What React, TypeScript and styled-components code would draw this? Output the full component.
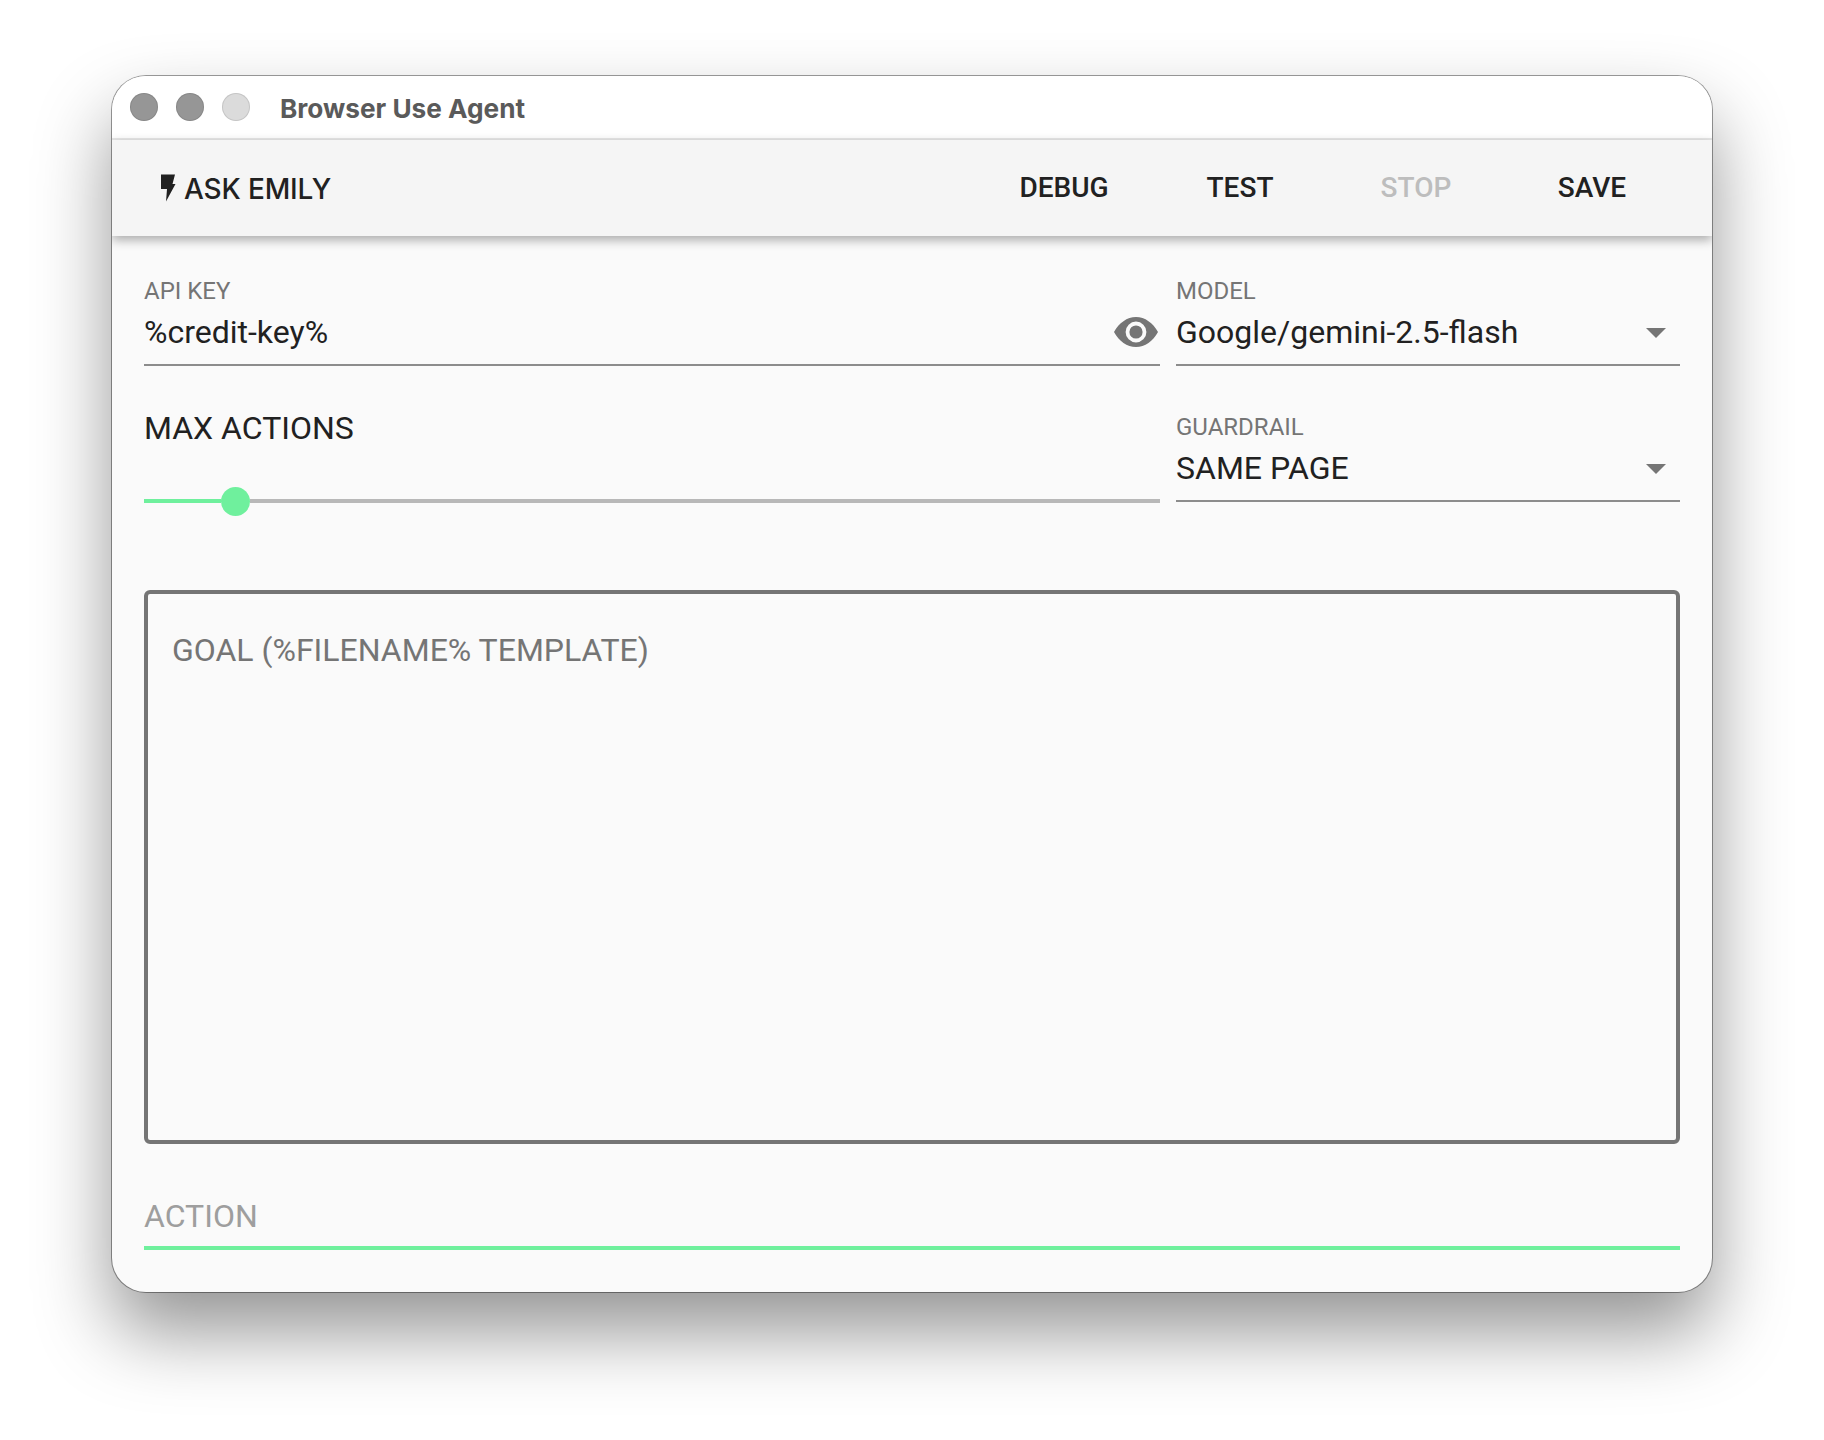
import React from "react"
import styled, { createGlobalStyle } from "styled-components"

const GlobalStyle = createGlobalStyle`
  html, body {
    margin: 0;
    padding: 0;
    background: #ffffff;
    font-family: "Roboto", "Liberation Sans", sans-serif;
  }
`

const Zap = () => (
  <svg width="18" height="28" viewBox="0 0 18 28" fill="#212121">
    <path d="M2 0.500h14l-2.500 9.500h3L7 27.500l1-12.500H2z" />
  </svg>
)

const Eye = () => (
  <svg width="48" height="48" viewBox="0 0 24 24" fill="#757575" fillRule="evenodd">
    <path d="M1 12C3.500 7.500 7.500 4.500 12 4.500s8.500 3 11 7.500c-2.500 4.500-6.500 7.500-11 7.500S3.500 16.500 1 12zM12 6.800a5.200 5.200 0 1 0 0 10.400 5.200 5.200 0 0 0 0-10.400zM12 8.700a3.300 3.300 0 1 1 0 6.600 3.300 3.300 0 0 1 0-6.600z" />
  </svg>
)

export default function App() {
  return (
    <>
      <GlobalStyle />
      <S.Page>
        <S.Window>
          <S.TitleBar>
            <S.Light $tone="#969696" />
            <S.Light $tone="#969696" />
            <S.Light $tone="#dbdbdb" />
            <S.Title>Browser Use Agent</S.Title>
          </S.TitleBar>
          <S.Toolbar>
            <S.AskButton>
              <Zap />
              <S.AskLabel>ASK EMILY</S.AskLabel>
            </S.AskButton>
            <S.Actions>
              <S.Action>DEBUG</S.Action>
              <S.Action>TEST</S.Action>
              <S.Action $disabled>STOP</S.Action>
              <S.Action>SAVE</S.Action>
            </S.Actions>
          </S.Toolbar>
          <S.Content>
            <S.Row>
              <S.Field $grow>
                <S.SmallLabel>API KEY</S.SmallLabel>
                <S.ValueLine>
                  <span>%credit-key%</span>
                  <S.EyeSlot>
                    <Eye />
                  </S.EyeSlot>
                </S.ValueLine>
              </S.Field>
              <S.Field>
                <S.SmallLabel>MODEL</S.SmallLabel>
                <S.ValueLine>
                  <span>Google/gemini-2.5-flash</span>
                  <S.Caret />
                </S.ValueLine>
              </S.Field>
            </S.Row>
            <S.SecondRow>
              <S.SliderField>
                <S.SliderLabel>MAX ACTIONS</S.SliderLabel>
                <S.Track>
                  <S.TrackFill />
                  <S.Thumb />
                  <S.TrackRest />
                </S.Track>
              </S.SliderField>
              <S.GuardrailField>
                <S.SmallLabel>GUARDRAIL</S.SmallLabel>
                <S.ValueLine>
                  <span>SAME PAGE</span>
                  <S.Caret />
                </S.ValueLine>
              </S.GuardrailField>
            </S.SecondRow>
            <S.GoalBox>GOAL (%FILENAME% TEMPLATE)</S.GoalBox>
            <S.ActionField>ACTION</S.ActionField>
          </S.Content>
        </S.Window>
      </S.Page>
    </>
  )
}

const S = {
  Page: styled.div`
    width: 1824px;
    height: 1440px;
    padding: 76px 112px 0;
    box-sizing: border-box;
    overflow: hidden;
  `,
  Window: styled.div`
    position: relative;
    width: 1600px;
    height: 1216px;
    box-sizing: border-box;
    border-radius: 34px;
    background: #fafafa;
    overflow: hidden;
    box-shadow: 0 0 0 1px rgba(0, 0, 0, 0.38), 0 40px 76px rgba(0, 0, 0, 0.42);
  `,
  TitleBar: styled.div`
    display: flex;
    align-items: center;
    height: 62px;
    padding-left: 18px;
    gap: 18px;
    background: #ffffff;
    border-bottom: 2px solid #e8e8e8;
  `,
  Light: styled.div<{ $tone: string }>`
    width: 28px;
    height: 28px;
    border-radius: 50%;
    background: ${(p) => p.$tone};
    box-shadow: inset 0 0 0 1px rgba(0, 0, 0, 0.1);
  `,
  Title: styled.div`
    margin-left: 12px;
    padding-top: 2px;
    font-family: "Inter", sans-serif;
    font-weight: 700;
    font-size: 26.2px;
    color: #5a5a5a;
  `,
  Toolbar: styled.div`
    position: relative;
    display: flex;
    align-items: center;
    justify-content: space-between;
    height: 96px;
    padding: 0 32px 0 47px;
    background: #f5f5f5;
    box-shadow: 0 4px 10px rgba(0, 0, 0, 0.32);
  `,
  AskButton: styled.div`
    display: flex;
    align-items: center;
    gap: 7px;
  `,
  AskLabel: styled.span`
    padding-top: 2px;
    font-family: "Inter", sans-serif;
    font-weight: 500;
    font-size: 28px;
    letter-spacing: -0.15px;
    color: #212121;
  `,
  Actions: styled.div`
    display: flex;
    align-items: center;
    padding-bottom: 2px;
  `,
  Action: styled.div<{ $disabled?: boolean }>`
    width: 176px;
    text-align: center;
    font-weight: 500;
    font-size: 28px;
    color: ${(p) => (p.$disabled ? "#bdbdbd" : "#212121")};
  `,
  Content: styled.div`
    display: flex;
    flex-direction: column;
    padding: 0 32px;
  `,
  Row: styled.div`
    display: flex;
    gap: 16px;
    margin-top: 41px;
  `,
  SecondRow: styled.div`
    display: flex;
    gap: 16px;
    margin-top: 42px;
  `,
  Field: styled.div<{ $grow?: boolean }>`
    display: flex;
    flex-direction: column;
    ${(p) => (p.$grow ? "flex: 1;" : "width: 504px;")}
  `,
  GuardrailField: styled.div`
    display: flex;
    flex-direction: column;
    width: 504px;
    margin-top: 5px;
  `,
  SmallLabel: styled.div`
    height: 28px;
    line-height: 28px;
    font-size: 24px;
    color: #757575;
  `,
  ValueLine: styled.div`
    display: flex;
    align-items: center;
    justify-content: space-between;
    height: 54px;
    padding-bottom: 5px;
    box-sizing: content-box;
    border-bottom: 2px solid #8c8c8c;
    font-size: 32px;
    color: #212121;
  `,
  EyeSlot: styled.div`
    display: flex;
    align-items: center;
  `,
  Caret: styled.div`
    width: 0;
    height: 0;
    margin: 2px 14px 0 0;
    border-left: 10px solid transparent;
    border-right: 10px solid transparent;
    border-top: 10px solid #757575;
  `,
  SliderField: styled.div`
    flex: 1;
    display: flex;
    flex-direction: column;
  `,
  SliderLabel: styled.div`
    height: 38px;
    padding-top: 1px;
    line-height: 38px;
    font-size: 32px;
    color: #212121;
  `,
  Track: styled.div`
    display: flex;
    align-items: center;
    height: 30px;
    margin-top: 39px;
  `,
  TrackFill: styled.div`
    width: 77px;
    height: 4px;
    background: #6ff09d;
  `,
  Thumb: styled.div`
    width: 29px;
    height: 29px;
    flex: none;
    border-radius: 50%;
    background: #6ff09d;
  `,
  TrackRest: styled.div`
    flex: 1;
    height: 4px;
    background: #b8b8b8;
  `,
  GoalBox: styled.div`
    height: 554px;
    box-sizing: border-box;
    margin-top: 74px;
    padding: 37px 24px;
    border: 4px solid #757575;
    border-radius: 6px;
    font-size: 32px;
    line-height: 38px;
    color: #757575;
  `,
  ActionField: styled.div`
    height: 69px;
    box-sizing: border-box;
    margin-top: 37px;
    padding-top: 16px;
    line-height: 38px;
    border-bottom: 4px solid #6ff09d;
    font-size: 32px;
    color: #9e9e9e;
  `,
}
